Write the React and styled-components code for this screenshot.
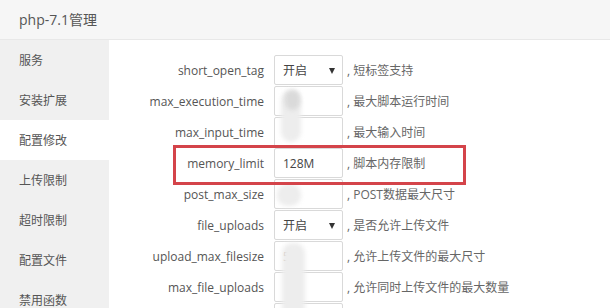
import React from "react";
import styled, { createGlobalStyle } from "styled-components";

const Global = createGlobalStyle`
  html, body { margin: 0; padding: 0; background: #fff; }
  body { font-family: "Open Sans", "Noto Sans CJK SC", sans-serif; }
  * { box-sizing: border-box; }
`;

const Page = styled.div`
  width: 610px;
  height: 308px;
  overflow: hidden;
  display: flex;
  flex-direction: column;
`;

const Header = styled.div`
  height: 40px;
  flex: none;
  background: #f6f6f6;
  border-bottom: 1px solid #e8e8e8;
  padding-left: 19px;
  line-height: 39px;
  font-size: 14px;
  color: #555;
`;

const Body = styled.div`
  flex: 1;
  display: flex;
  min-height: 0;
`;

const Sidebar = styled.div`
  width: 109px;
  flex: none;
  background: #f0f0f0;
  display: flex;
  flex-direction: column;
`;

const NavItem = styled.div`
  height: 40px;
  flex: none;
  line-height: 42px;
  padding-left: 19px;
  font-size: 12px;
  color: #555;
  background: ${(p) => (p.$active ? "#fff" : "transparent")};
`;

const Content = styled.div`
  position: relative;
  flex: 1;
  padding-top: 15px;
  display: flex;
  flex-direction: column;
  gap: 1px;
`;

const Row = styled.div`
  position: relative;
  display: flex;
  align-items: center;
  height: 30px;
  flex: none;
`;

const Label = styled.div`
  width: 155px;
  flex: none;
  text-align: right;
  font-size: 12px;
  color: #555;
  margin-right: 10px;
`;

const Field = styled.div`
  position: relative;
  width: 69px;
  height: 30px;
  flex: none;
  border: 1px solid #d9d9d9;
  border-radius: 2px;
  background: #fff;
  padding-left: 8px;
  display: flex;
  align-items: center;
  font-size: 12px;
  color: #444;
  overflow: hidden;
`;

const Arrow = styled.span`
  position: absolute;
  right: 7px;
  top: 12px;
  width: 0;
  height: 0;
  border-left: 3px solid transparent;
  border-right: 3px solid transparent;
  border-top: 6px solid #333;
`;

const Comment = styled.div`
  margin-left: 4px;
  font-size: 12px;
  color: #666;
  white-space: nowrap;
`;

const Highlight = styled.div`
  position: absolute;
  left: 64px;
  top: -3px;
  width: 293px;
  height: 40px;
  border: 3px solid #d4444a;
  pointer-events: none;
  z-index: 2;
`;

const Redact = styled.div`
  position: absolute;
  z-index: 1;
  pointer-events: none;
  border-radius: 10px;
  filter: blur(2px);
  background: ${(p) => p.$c || "#ededed"};
`;

const nav = ["服务", "安装扩展", "配置修改", "上传限制", "超时限制", "配置文件", "禁用函数"];

const rows = [
  { k: "short_open_tag", t: "select", v: "开启", c: "短标签支持" },
  { k: "max_execution_time", t: "input", v: "", c: "最大脚本运行时间" },
  { k: "max_input_time", t: "input", v: "", c: "最大输入时间" },
  { k: "memory_limit", t: "input", v: "128M", c: "脚本内存限制", hl: true },
  { k: "post_max_size", t: "input", v: "", c: "POST数据最大尺寸" },
  { k: "file_uploads", t: "select", v: "开启", c: "是否允许上传文件" },
  { k: "upload_max_filesize", t: "input", v: "5", c: "允许上传文件的最大尺寸" },
  { k: "max_file_uploads", t: "input", v: "", c: "允许同时上传文件的最大数量" },
  { k: "", t: "input", v: "", c: "" },
];

export default function App() {
  return (
    <>
      <Global />
      <Page>
        <Header>php-7.1管理</Header>
        <Body>
          <Sidebar>
            {nav.map((n, i) => (
              <NavItem key={n} $active={i === 2}>
                {n}
              </NavItem>
            ))}
          </Sidebar>
          <Content>
            {rows.map((r, i) => (
              <Row key={i}>
                <Label>{r.k}</Label>
                <Field>
                  {r.v}
                  {r.t === "select" && <Arrow />}
                </Field>
                {r.c && <Comment>, {r.c}</Comment>}
                {r.hl && <Highlight />}
              </Row>
            ))}
            <Redact style={{ left: 172, top: 50, width: 20, height: 52 }} />
            <Redact $c="#dadada" style={{ left: 176, top: 50, width: 15, height: 20 }} />
            <Redact style={{ left: 168, top: 144, width: 24, height: 22 }} />
            <Redact style={{ left: 173, top: 203, width: 23, height: 80 }} />
          </Content>
        </Body>
      </Page>
    </>
  );
}
